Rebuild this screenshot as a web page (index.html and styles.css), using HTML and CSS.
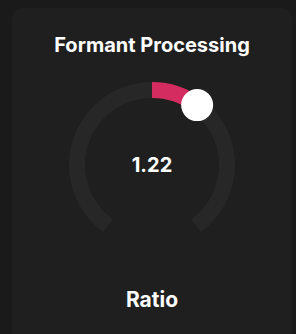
FILE: index.html
```html
<!DOCTYPE html>
<html>
<head>
<meta charset="utf-8">
<link rel="stylesheet" href="styles.css">
</head>
<body>
<div class="card">
  <h1 class="title">Formant Processing</h1>
  <div class="knob">
    <svg class="dial" width="166" height="166" viewBox="0 0 166 166">
      <path d="M 38.915 143.675 A 75 75 0 1 1 127.085 143.675" fill="none" stroke="#272727" stroke-width="16"/>
      <path d="M 83 8 A 75 75 0 0 1 128.135 23.105" fill="none" stroke="#d42c60" stroke-width="16"/>
      <circle cx="128.135" cy="23.105" r="16" fill="#ffffff"/>
    </svg>
    <div class="value">1.22</div>
  </div>
  <div class="label">Ratio</div>
</div>
</body>
</html>
```
FILE: styles.css
```css
html, body {
  margin: 0;
  padding: 0;
  background: #1a1a1a;
  height: 100%;
  overflow: hidden;
}
body {
  font-family: Inter, "Noto Sans", sans-serif;
  color: #ffffff;
}
.card {
  margin: 8px 4px 0 12px;
  width: 280px;
  height: 340px;
  background: #1f1f1f;
  border-radius: 12px;
  display: flex;
  flex-direction: column;
  align-items: center;
  box-sizing: border-box;
  padding-top: 25px;
}
.title {
  margin: 0;
  font-size: 20px;
  line-height: 24px;
  font-weight: 700;
}
.knob {
  margin-top: 25px;
  width: 166px;
  height: 166px;
  position: relative;
}
.dial {
  display: block;
}
.value {
  position: absolute;
  left: 0;
  right: 0;
  top: 70px;
  text-align: center;
  font-size: 20px;
  line-height: 26px;
  font-weight: 700;
}
.label {
  margin-top: 39px;
  font-size: 21px;
  line-height: 26px;
  font-weight: 700;
}
```
